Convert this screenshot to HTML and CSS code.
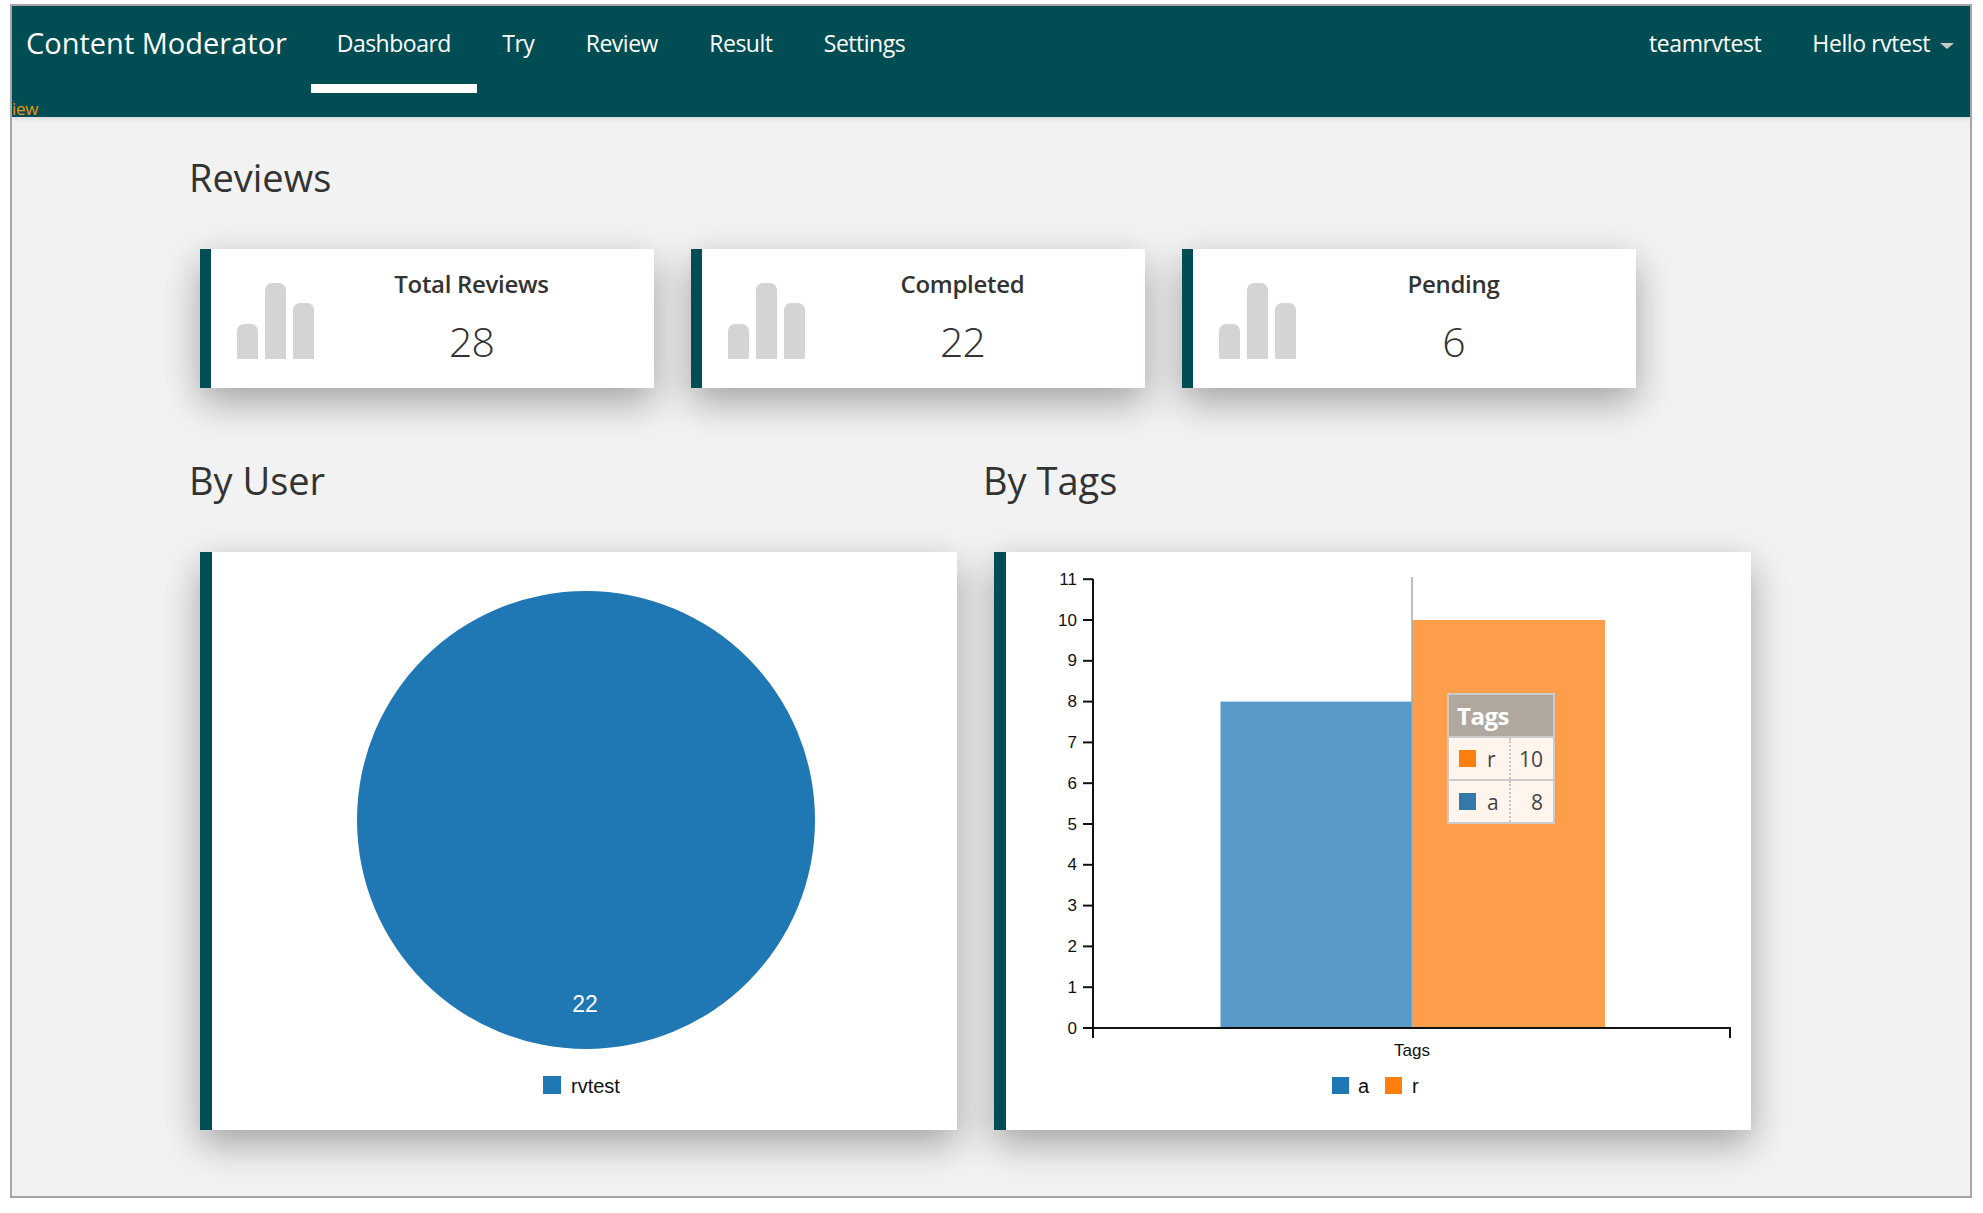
FILE: index.html
```html
<!DOCTYPE html>
<html>
<head>
  <meta charset="UTF-8">
  <title>Content Moderator</title>
  <link rel="stylesheet" href="styles.css">
</head>
<body>
  <div class="frame">
    <header class="topbar">
      <a href="#" class="brand">Content Moderator</a>
      <nav class="nav">
        <a href="#" class="nav-item active">Dashboard</a>
        <a href="#" class="nav-item">Try</a>
        <a href="#" class="nav-item">Review</a>
        <a href="#" class="nav-item">Result</a>
        <a href="#" class="nav-item">Settings</a>
      </nav>
      <div class="account">
        <a href="#" class="team">teamrvtest</a>
        <a href="#" class="hello">Hello rvtest<span class="caret"></span></a>
      </div>
      <span class="stray">iew</span>
    </header>

    <main class="content">
      <h2 class="title">Reviews</h2>
      <div class="stats">
        <div class="stat">
          <div class="bars"><span class="bar low"></span><span class="bar high"></span><span class="bar mid"></span></div>
          <div class="stat-text">
            <div class="stat-name">Total Reviews</div>
            <div class="stat-value">28</div>
          </div>
        </div>
        <div class="stat">
          <div class="bars"><span class="bar low"></span><span class="bar high"></span><span class="bar mid"></span></div>
          <div class="stat-text">
            <div class="stat-name">Completed</div>
            <div class="stat-value">22</div>
          </div>
        </div>
        <div class="stat">
          <div class="bars"><span class="bar low"></span><span class="bar high"></span><span class="bar mid"></span></div>
          <div class="stat-text">
            <div class="stat-name">Pending</div>
            <div class="stat-value">6</div>
          </div>
        </div>
      </div>

      <div class="charts">
        <section class="chart-col">
          <h2 class="title">By User</h2>
          <div class="chart-card">
            <svg class="chart" width="745" height="578" viewBox="0 0 745 578">
              <circle cx="374" cy="268" r="229" fill="#1f77b4"/>
              <text x="373" y="460" class="pie-label" text-anchor="middle">22</text>
              <rect x="331" y="524" width="18" height="18" fill="#1f77b4"/>
              <text x="359" y="541" class="legend-label">rvtest</text>
            </svg>
          </div>
        </section>

        <section class="chart-col">
          <h2 class="title">By Tags</h2>
          <div class="chart-card">
            <svg class="chart" width="745" height="578" viewBox="0 0 745 578">
              <rect x="214.5" y="149.6" width="191.5" height="326.4" fill="#5799c7"/>
              <rect x="406" y="68" width="193" height="408" fill="#ff9e4a"/>
              <line x1="406" y1="25" x2="406" y2="476" class="focus-line"/>

              <g class="ticks">
                <line x1="77" x2="87" y1="476" y2="476"/>
                <line x1="77" x2="87" y1="435.2" y2="435.2"/>
                <line x1="77" x2="87" y1="394.4" y2="394.4"/>
                <line x1="77" x2="87" y1="353.6" y2="353.6"/>
                <line x1="77" x2="87" y1="312.8" y2="312.8"/>
                <line x1="77" x2="87" y1="272" y2="272"/>
                <line x1="77" x2="87" y1="231.2" y2="231.2"/>
                <line x1="77" x2="87" y1="190.4" y2="190.4"/>
                <line x1="77" x2="87" y1="149.6" y2="149.6"/>
                <line x1="77" x2="87" y1="108.8" y2="108.8"/>
                <line x1="77" x2="87" y1="68" y2="68"/>
                <line x1="77" x2="87" y1="27.2" y2="27.2"/>
                <path d="M87 27V476H724V486M87 476V486" fill="none"/>
              </g>

              <g class="tick-labels" text-anchor="end">
                <text x="71" y="482">0</text>
                <text x="71" y="441">1</text>
                <text x="71" y="400">2</text>
                <text x="71" y="359">3</text>
                <text x="71" y="318">4</text>
                <text x="71" y="278">5</text>
                <text x="71" y="237">6</text>
                <text x="71" y="196">7</text>
                <text x="71" y="155">8</text>
                <text x="71" y="114">9</text>
                <text x="71" y="74">10</text>
                <text x="71" y="33">11</text>
              </g>
              <text x="406" y="504" class="tick-labels" text-anchor="middle">Tags</text>

              <rect x="326" y="525" width="17" height="17" fill="#1f77b4"/>
              <text x="352" y="541" class="legend-label">a</text>
              <rect x="379" y="525" width="17" height="17" fill="#ff7f0e"/>
              <text x="406" y="541" class="legend-label">r</text>
            </svg>

            <table class="tip">
              <tr><th colspan="2">Tags</th></tr>
              <tr>
                <td class="tip-name"><span class="swatch orange"></span>r</td>
                <td class="tip-value">10</td>
              </tr>
              <tr>
                <td class="tip-name"><span class="swatch blue"></span>a</td>
                <td class="tip-value">8</td>
              </tr>
            </table>
          </div>
        </section>
      </div>
    </main>
  </div>
</body>
</html>
```

FILE: styles.css
```css
* {
  box-sizing: border-box;
}

body {
  margin: 0;
  background-color: white;
  font-family: "Open Sans", "Noto Sans", sans-serif;
  color: #333;
}

a {
  color: white;
  text-decoration: none;
}

.frame {
  height: 1194px;
  margin: 4px 11px 15px 10px;
  border: 2px solid #a6a6a6;
  background-color: #f2f2f2;
  overflow: hidden;
}

/* top bar */
.topbar {
  position: relative;
  display: flex;
  align-items: flex-start;
  height: 111px;
  padding-left: 14px;
  background-color: #004d53;
  box-shadow: 0 2px 4px rgba(0, 0, 0, 0.1);
}

.brand {
  width: 285px;
  font-size: 29px;
  line-height: 74px;
}

.nav {
  display: flex;
}

.nav-item {
  height: 87px;
  padding: 0 25.7px;
  font-size: 23px;
  line-height: 74px;
  letter-spacing: -0.5px;
}

.nav-item.active {
  border-bottom: 9px solid white;
}

.account {
  display: flex;
  gap: 51px;
  margin-left: auto;
  margin-right: 16px;
  font-size: 23px;
  line-height: 74px;
  letter-spacing: -0.4px;
}

.caret {
  display: inline-block;
  margin-left: 10px;
  vertical-align: middle;
  border-top: 6px solid #c8c8c8;
  border-left: 7px solid transparent;
  border-right: 7px solid transparent;
}

.stray {
  position: absolute;
  left: 0;
  bottom: -2px;
  font-size: 17px;
  line-height: 20px;
  letter-spacing: -0.3px;
  color: #e8960c;
}

/* main area */
.content {
  padding-left: 177px;
}

.title {
  margin: 0;
  font-size: 38px;
  font-weight: 400;
  line-height: 50px;
  color: #333;
}

.content > .title {
  padding-top: 35px;
  height: 132px;
}

.stats {
  display: flex;
  gap: 37px;
  margin-left: 11px;
}

.stat {
  display: flex;
  align-items: flex-end;
  width: 454px;
  height: 139px;
  padding: 0 25px 29px 26px;
  border-left: 11px solid #004d53;
  background-color: white;
  box-shadow: 0 14px 36px rgba(0, 0, 0, 0.33);
}

.bars {
  display: flex;
  align-items: flex-end;
  gap: 7px;
}

.bar {
  width: 21px;
  border-radius: 7px 7px 0 0;
  background-color: #d4d4d4;
}

.bar.low {
  height: 35px;
}

.bar.high {
  height: 76px;
}

.bar.mid {
  height: 56px;
}

.stat-text {
  flex: 1;
  align-self: flex-start;
  padding-top: 20px;
  text-align: center;
}

.stat-name {
  font-size: 24px;
  font-weight: 600;
  line-height: 30px;
  letter-spacing: -0.3px;
}

.stat-value {
  font-size: 41px;
  font-weight: 300;
  line-height: 56px;
  letter-spacing: -1px;
  margin-top: 14px;
}

.charts {
  display: flex;
  gap: 37px;
  margin-top: 67px;
}

.chart-col {
  width: 757px;
}

.chart-col .title {
  height: 97px;
}

.chart-card {
  position: relative;
  width: 757px;
  height: 578px;
  margin-left: 11px;
  border-left: 12px solid #004d53;
  background-color: white;
  box-shadow: 0 14px 36px rgba(0, 0, 0, 0.33);
}

.chart {
  display: block;
  font-family: "Liberation Sans", Arial, sans-serif;
}

.pie-label {
  font-size: 23px;
  fill: white;
}

.legend-label {
  font-size: 20px;
  fill: #111;
}

.tick-labels {
  font-size: 17px;
  fill: #111;
}

.ticks line,
.ticks path {
  stroke: #111;
  stroke-width: 2;
}

.focus-line {
  stroke: #aaa;
  stroke-width: 1.5;
}

/* hover tooltip */
.tip {
  position: absolute;
  left: 441px;
  top: 141px;
  width: 108px;
  border-collapse: collapse;
  border: 2px solid #ccc;
  font-size: 21px;
  background-color: #fff5ec;
}

.tip th {
  height: 43px;
  padding: 0 8px;
  background-color: #b0a89e;
  color: white;
  font-size: 24px;
  font-weight: 700;
  text-align: left;
  letter-spacing: -0.5px;
}

.tip td {
  height: 43px;
  border-top: 2px solid #ccc;
  color: #444;
}

.tip-name {
  width: 62px;
  padding-left: 10px;
  border-right: 2px dotted #c4c4c4;
  white-space: nowrap;
}

.tip-value {
  padding-right: 10px;
  text-align: right;
}

.swatch {
  display: inline-block;
  width: 17px;
  height: 17px;
  margin-right: 11px;
}

.swatch.orange {
  background-color: #ff7f0e;
}

.swatch.blue {
  background-color: #3579a9;
}
```
